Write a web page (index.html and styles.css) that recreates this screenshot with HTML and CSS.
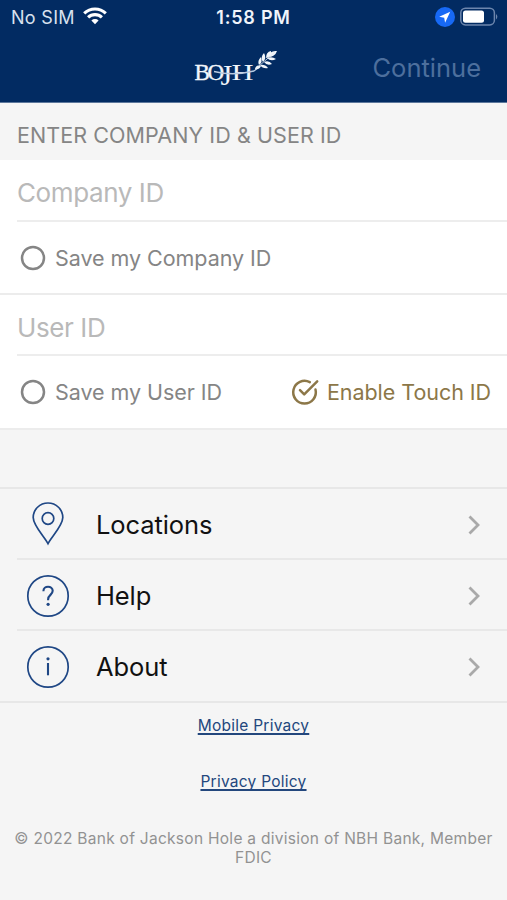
FILE: index.html
```html
<!DOCTYPE html>
<html lang="en">
<head>
<meta charset="utf-8">
<title>Sign in</title>
<link rel="stylesheet" href="styles.css">
</head>
<body>
<header class="top">
  <div class="status">
    <div class="carrier"><span>No SIM</span>
      <svg width="24" height="18" viewBox="0 0 24 18" fill="none" stroke="#fff" stroke-width="3.1"><path d="M1.2 6.4a15.6 15.6 0 0 1 21.6 0"/><path d="M5.1 10.4a10 10 0 0 1 13.8 0"/><path d="M12 17.2l-3.6-3.7a5.2 5.2 0 0 1 7.2 0z" fill="#fff" stroke="none"/></svg>
    </div>
    <div class="clock">1:58 PM</div>
    <div class="indicators">
      <svg width="20" height="20" viewBox="0 0 20 20"><circle cx="10" cy="10" r="10" fill="#1769f5"/><path d="M15.2 4.8L4.2 9.8l5 .9.9 5z" fill="#fff"/></svg>
      <svg width="38" height="20" viewBox="0 0 38 20"><rect x=".8" y="1.3" width="33.6" height="16.6" rx="4.6" fill="none" stroke="#6d86ad" stroke-width="1.5"/><rect x="3" y="3.5" width="21" height="12.2" rx="2.5" fill="#fff"/><path d="M36 7a3.4 3.4 0 0 1 0 5.4z" fill="#6d86ad"/></svg>
    </div>
  </div>
  <div class="nav">
    <svg class="logo" width="90" height="42" viewBox="0 0 90 42" fill="#f2f6fb">
      <text class="logo-text" y="32.5"><tspan x="3.5">B</tspan><tspan x="16.5">O</tspan><tspan class="tall" x="29.5" y="37.5">J</tspan><tspan class="wide" x="40.5" y="32.5" textLength="22" lengthAdjust="spacingAndGlyphs">H</tspan></text>
      <path d="M23 24.5c12 3 28 2.5 40-.5l4-3" fill="none" stroke="#b9c9df" stroke-width="1.3"/>
      <path d="M64 22q1-5 6-3q-2 4-6 3zM68 18q-2-4 2-8q2 5-2 8zM72 15q-3-5 1-9q3 5-1 9zM75 11q0-6 5-7q1 6-5 7zM77 10q2-7 9-6q-2 6-9 6zM69 18q5-1 8 3q-5 1-8-3zM73 15q5-2 8 2q-5 2-8-2zM76 11q5-2 9 1q-5 3-9-1z"/>
      <path d="M64 22.5L84 5" fill="none" stroke="#dfe8f2" stroke-width=".8"/>
    </svg>
    <div class="continue">Continue</div>
  </div>
</header>
<main>
  <h1 class="section"><span>ENTER COMPANY ID &amp; USER ID</span></h1>
  <section class="form">
    <div class="field"><span>Company ID</span></div>
    <div class="option"><div class="choice"><svg class="radio" width="26" height="26" viewBox="0 0 26 26"><circle cx="13" cy="13" r="11"/></svg><span>Save my Company ID</span></div></div>
    <div class="field second"><span>User ID</span></div>
    <div class="option last"><div class="choice"><svg class="radio" width="26" height="26" viewBox="0 0 26 26"><circle cx="13" cy="13" r="11"/></svg><span>Save my User ID</span></div>
      <div class="choice touch"><svg width="30" height="30" viewBox="0 0 30 30" fill="none" stroke="#8c7748" stroke-width="2.5" stroke-linecap="round" stroke-linejoin="round"><path d="M19.8 5.2A11.3 11.3 0 1 0 25.5 12.5"/><path d="M10 13.2l4.2 4.2L27.2 4.4"/></svg><span>Enable Touch ID</span></div></div>
  </section>
  <nav class="menu">
    <div class="item"><svg class="icon" width="44" height="44" viewBox="0 0 44 44"><path d="M22 41.7C18.5 35 7.2 23.5 7.2 15.5A14.8 14.5 0 0 1 36.8 15.5C36.8 23.5 25.5 35 22 41.7z"/><circle cx="22" cy="16.5" r="5.8"/></svg><span class="label">Locations</span><svg class="chev" width="14" height="22" viewBox="0 0 14 22"><path d="M2.5 2.5L11 11l-8.5 8.5"/></svg></div>
    <div class="item"><svg class="icon" width="44" height="44" viewBox="0 0 44 44"><circle cx="22" cy="22" r="20.2"/><path class="mark" d="M17.4 17.2c0-6 9.3-5.7 9.3-.4 0 4.2-4.6 4-4.6 8.6v.8"/><circle class="dot" cx="22.1" cy="30.3" r="1.6"/></svg><span class="label">Help</span><svg class="chev" width="14" height="22" viewBox="0 0 14 22"><path d="M2.5 2.5L11 11l-8.5 8.5"/></svg></div>
    <div class="item"><svg class="icon" width="44" height="44" viewBox="0 0 44 44"><circle cx="22" cy="22" r="20.2"/><path class="mark" d="M22 18v12.3"/><circle class="dot" cx="22" cy="13.8" r="1.6"/></svg><span class="label">About</span><svg class="chev" width="14" height="22" viewBox="0 0 14 22"><path d="M2.5 2.5L11 11l-8.5 8.5"/></svg></div>
  </nav>
</main>
<footer class="footer">
  <a>Mobile Privacy</a>
  <a>Privacy Policy</a>
  <p>© 2022 Bank of Jackson Hole a division of NBH Bank, Member<br>FDIC</p>
</footer>
</body>
</html>
```
FILE: styles.css
```css
* { box-sizing: border-box; }
body { margin: 0; width: 507px; height: 900px; overflow: hidden; background: #f5f5f5; font-family: Inter, "Liberation Sans", sans-serif; white-space: nowrap; }
svg { display: block; flex: none; }
.top { height: 103px; background: #022b62; border-bottom: 1px solid #5d789c; }
.status { display: grid; grid-template-columns: 1fr auto 1fr; height: 34px; align-items: center; padding: 0 9px 0 11px; color: #fff; font-size: 18px; }
.carrier { display: flex; gap: 8px; align-items: center; color: #d8e1ee; letter-spacing: .3px; }
.carrier svg { margin-top: -3px; }
.clock { font-weight: 600; letter-spacing: .8px; color: #f0f4fa; margin-left: -2px; }
.indicators { display: flex; justify-content: flex-end; gap: 5px; align-items: center; }
.nav { height: 68px; display: flex; justify-content: space-between; align-items: center; padding: 0 26px 0 191px; }
.logo-text { font-family: "Liberation Serif", serif; font-size: 23px; stroke: #f2f6fb; stroke-width: .4px; }
.logo-text .tall { font-size: 30px; stroke-width: 0; }
.logo-text .wide { stroke-width: 0; }
.continue { font-size: 25.5px; color: #4d6f9d; margin-top: -2px; }
.section { margin: 0; height: 57px; padding: 6px 17px 0; display: flex; align-items: center; font-size: 21.5px; font-weight: 400; letter-spacing: .08px; color: #858585; }
.form { background: #fff; }
.field { height: 62px; margin-left: 17px; padding: 6px 0 1px; border-bottom: 2px solid #ededed; display: flex; align-items: center; font-size: 26px; letter-spacing: -.4px; color: #b9b9b9; }
.second { height: 61px; }
.option { height: 73px; border-bottom: 2px solid #ececec; display: flex; align-items: center; justify-content: space-between; padding: 0 16px 0 20px; font-size: 21.5px; letter-spacing: -.05px; color: #858585; }
.last { height: 74px; }
.choice { display: flex; align-items: center; gap: 9px; }
.radio { fill: none; stroke: #858585; stroke-width: 2.5; }
.touch { color: #8c7748; gap: 7px; }
.menu { margin-top: 57px; border-top: 2px solid #e7e7e7; border-bottom: 2px solid #e7e7e7; }
.item { height: 71px; padding: 0 26px; display: flex; align-items: center; position: relative; }
.item:last-child { height: 70px; padding-top: 1px; }
.item + .item::before { content: ""; position: absolute; left: 17px; right: 0; top: -2px; height: 2px; background: #e8e8e8; }
.icon { fill: none; stroke: #1f4785; stroke-width: 1.7; }
.item:first-child .icon { margin-top: -1px; }
.icon .mark { stroke-width: 2.1; }
.icon .dot { fill: #1f4785; stroke: none; }
.label { flex: 1; margin-left: 26px; margin-top: -1px; font-size: 25.5px; letter-spacing: -.1px; color: #111; }
.chev { fill: none; stroke: #a9a9a9; stroke-width: 2.8; }
.footer { display: flex; flex-direction: column; align-items: center; padding-top: 13px; font-size: 15.5px; line-height: 19px; color: #929292; }
.footer a { color: #23477d; text-decoration: underline; text-decoration-thickness: 1.5px; text-underline-offset: 2px; text-decoration-skip-ink: none; margin-bottom: 37px; letter-spacing: .25px; }
.footer p { margin: 1px 0 0; text-align: center; letter-spacing: .28px; }
```
